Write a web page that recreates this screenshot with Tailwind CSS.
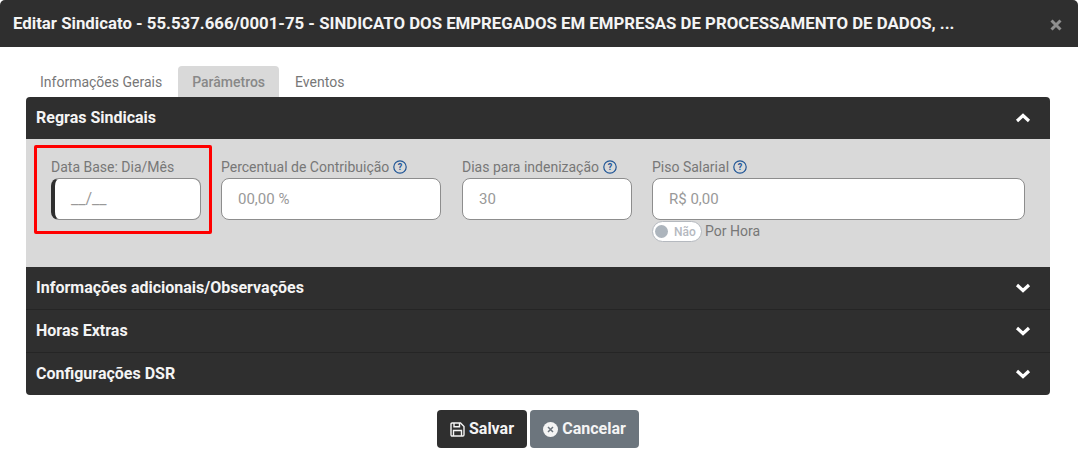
<!DOCTYPE html>
<html lang="pt-BR">
<head>
    <meta charset="UTF-8">
    <title>Editar Sindicato</title>
    <script src="https://cdn.jsdelivr.net/npm/@tailwindcss/browser@4"></script>
</head>
<body class="bg-white font-['Roboto',sans-serif] h-[458px] w-[1078px] overflow-hidden">
    <!-- modal header -->
    <header class="h-[47px] bg-[#2f2f2f] flex items-center justify-between pl-[13px] pr-[16px] rounded-t-[5px]">
        <h1 class="text-[16.8px] font-bold text-[#f4f4f4] whitespace-nowrap">Editar Sindicato - 55.537.666/0001-75 - SINDICATO DOS EMPREGADOS EM EMPRESAS DE PROCESSAMENTO DE DADOS, ...</h1>
        <svg class="w-[12px] h-[12px] mt-[3px]" viewBox="0 0 12 12"><path d="M1.5 1.5L10.5 10.5M10.5 1.5L1.5 10.5" stroke="#8f8f8f" stroke-width="3"/></svg>
    </header>

    <main class="px-[26px] w-[1050px] box-content">
        <!-- tabs -->
        <ul class="flex h-[31px] mt-[19px] text-[14px] pl-[1px]">
            <li class="px-[13px] pt-[1px] flex items-center text-[#777777]">Informações Gerais</li>
            <li class="ml-[3px] px-[14px] pt-[1px] flex items-center bg-[#d9d9d9] text-[#888888] font-medium rounded-t-[4px]">Parâmetros</li>
            <li class="px-[16px] pt-[1px] flex items-center text-[#777777]">Eventos</li>
        </ul>

        <section class="w-[1024px] rounded-[4px] overflow-hidden bg-[#2f2f2f]">
            <div class="h-[42px] flex items-center justify-between pl-[10px] pr-[19px]">
                <h2 class="text-[16px] font-bold text-[#f4f4f4]">Regras Sindicais</h2>
                <svg class="w-[16px] h-[10px]" viewBox="0 0 16 10"><path d="M2 8L8 2.5L14 8" fill="none" stroke="#ffffff" stroke-width="3.2"/></svg>
            </div>

            <div class="relative h-[128px] bg-[#d9d9d9] flex pl-[25px] pt-[18px] text-[14px] text-[#777777]">
                <!-- red highlight -->
                <div class="absolute left-[8px] top-[6px] w-[178px] h-[89px] border-[3px] border-[#ff0000] rounded-[2px]"></div>

                <div class="w-[150px] mr-[20px]">
                    <label class="block h-[21px] leading-[20px]">Data Base: Dia/Mês</label>
                    <div class="h-[42px] bg-white border border-[#8d8d8d] border-l-[4px] border-l-[#2f2f2f] rounded-[8px] pl-[16px] flex items-center text-[16px] text-[#999999]">__/__</div>
                </div>

                <div class="w-[220px] mr-[21px]">
                    <label class="flex items-start h-[21px] leading-[20px]">Percentual de Contribuição
                        <svg class="w-[14px] h-[14px] ml-[4px] mt-[3px]" viewBox="0 0 14 14"><circle cx="7" cy="7" r="6.2" fill="none" stroke="#1f5596" stroke-width="1.2"/><text x="7" y="10.2" text-anchor="middle" font-size="9" font-weight="700" fill="#1f5596" font-family="Roboto">?</text></svg>
                    </label>
                    <div class="h-[42px] bg-white border border-[#8d8d8d] rounded-[8px] pl-[16px] flex items-center text-[15px] text-[#999999]">00,00 %</div>
                </div>

                <div class="w-[170px] mr-[20px]">
                    <label class="flex items-start h-[21px] leading-[20px]">Dias para indenização
                        <svg class="w-[14px] h-[14px] ml-[4px] mt-[3px]" viewBox="0 0 14 14"><circle cx="7" cy="7" r="6.2" fill="none" stroke="#1f5596" stroke-width="1.2"/><text x="7" y="10.2" text-anchor="middle" font-size="9" font-weight="700" fill="#1f5596" font-family="Roboto">?</text></svg>
                    </label>
                    <div class="h-[42px] bg-white border border-[#8d8d8d] rounded-[8px] pl-[16px] flex items-center text-[15px] text-[#999999]">30</div>
                </div>

                <div class="w-[373px]">
                    <label class="flex items-start h-[21px] leading-[20px]">Piso Salarial
                        <svg class="w-[14px] h-[14px] ml-[4px] mt-[3px]" viewBox="0 0 14 14"><circle cx="7" cy="7" r="6.2" fill="none" stroke="#1f5596" stroke-width="1.2"/><text x="7" y="10.2" text-anchor="middle" font-size="9" font-weight="700" fill="#1f5596" font-family="Roboto">?</text></svg>
                    </label>
                    <div class="h-[42px] bg-white border border-[#8d8d8d] rounded-[8px] pl-[16px] flex items-center text-[15px] text-[#999999]">R$ 0,00</div>
                    <div class="flex items-center mt-[1px] h-[21px]">
                        <div class="w-[50px] h-[21px] bg-white border border-[#b5b9bf] rounded-full flex items-center pl-[2px]">
                            <span class="w-[13px] h-[13px] rounded-full bg-[#adb5bd]"></span>
                            <span class="ml-[6px] text-[12px] font-medium text-[#b5b9bf]">Não</span>
                        </div>
                        <span class="ml-[3px]">Por Hora</span>
                    </div>
                </div>
            </div>

            <div class="h-[43px] flex items-center justify-between pl-[10px] pr-[19px] border-b border-[#252525]">
                <h2 class="text-[16px] font-bold text-[#f4f4f4]">Informações adicionais/Observações</h2>
                <svg class="w-[16px] h-[10px]" viewBox="0 0 16 10"><path d="M2 2L8 7.5L14 2" fill="none" stroke="#ffffff" stroke-width="3.2"/></svg>
            </div>
            <div class="h-[43px] flex items-center justify-between pl-[10px] pr-[19px] border-b border-[#252525]">
                <h2 class="text-[16px] font-bold text-[#f4f4f4]">Horas Extras</h2>
                <svg class="w-[16px] h-[10px]" viewBox="0 0 16 10"><path d="M2 2L8 7.5L14 2" fill="none" stroke="#ffffff" stroke-width="3.2"/></svg>
            </div>
            <div class="h-[42px] flex items-center justify-between pl-[10px] pr-[19px]">
                <h2 class="text-[16px] font-bold text-[#f4f4f4]">Configurações DSR</h2>
                <svg class="w-[16px] h-[10px]" viewBox="0 0 16 10"><path d="M2 2L8 7.5L14 2" fill="none" stroke="#ffffff" stroke-width="3.2"/></svg>
            </div>
        </section>

        <!-- footer buttons -->
        <div class="flex justify-center gap-[3px] mt-[15px] w-[1024px] text-[16px] font-bold">
            <button class="w-[90px] h-[38px] bg-[#2f2f2f] text-[#f4f4f4] rounded-[4px] flex items-center justify-center gap-[4px]">
                <svg class="w-[15px] h-[15px]" viewBox="0 0 15 15" fill="none" stroke="#f4f4f4" stroke-width="1.4"><path d="M1 2.2Q1 1 2.2 1H10.5L14 4.5V12.8Q14 14 12.8 14H2.2Q1 14 1 12.8Z"/><path d="M4 1V4.8H9.5V1"/><path d="M3.5 14V8.5H11.5V14"/></svg>
                Salvar
            </button>
            <button class="w-[109px] h-[38px] bg-[#6c757d] text-[#f4f4f4] rounded-[4px] flex items-center justify-center gap-[4px]">
                <svg class="w-[15px] h-[15px]" viewBox="0 0 15 15"><circle cx="7.5" cy="7.5" r="7.5" fill="#f4f4f4"/><path d="M5 5L10 10M10 5L5 10" stroke="#6c757d" stroke-width="1.5"/></svg>
                Cancelar
            </button>
        </div>
    </main>
</body>
</html>
